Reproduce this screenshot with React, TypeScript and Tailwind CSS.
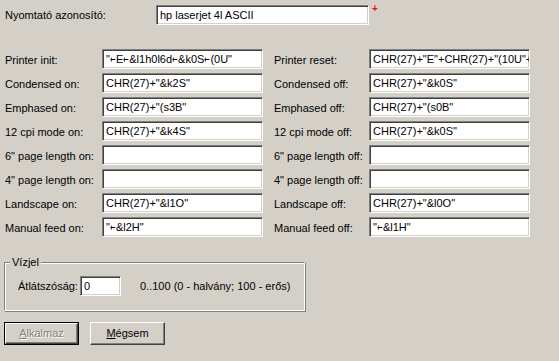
import React from 'react';

// Printer escape-code settings (left: "on", right: "off")
const rows: [string, string, string, string][] = [
  ['Printer init:', '"←E←&l1h0l6d←&k0S←(0U"', 'Printer reset:', 'CHR(27)+"E"+CHR(27)+"(10U"+'],
  ['Condensed on:', 'CHR(27)+"&k2S"', 'Condensed off:', 'CHR(27)+"&k0S"'],
  ['Emphased on:', 'CHR(27)+"(s3B"', 'Emphased off:', 'CHR(27)+"(s0B"'],
  ['12 cpi mode on:', 'CHR(27)+"&k4S"', '12 cpi mode off:', 'CHR(27)+"&k0S"'],
  ['6" page length on:', '', '6" page length off:', ''],
  ['4" page length on:', '', '4" page length off:', ''],
  ['Landscape on:', 'CHR(27)+"&l1O"', 'Landscape off:', 'CHR(27)+"&l0O"'],
  ['Manual feed on:', '"←&l2H"', 'Manual feed off:', '"←&l1H"'],
];

// the ESC char shows as a small narrow arrow
function renderCode(value: string) {
  return value.split('←').map((part, i) => (
    <React.Fragment key={i}>
      {i > 0 && (
        <span className="inline-block w-[6px] font-['DejaVu_Sans']">
          <span className="inline-block scale-x-[0.6] origin-left">←</span>
        </span>
      )}
      {part}
    </React.Fragment>
  ));
}

function Field({ value, className = '' }: { value: string; className?: string }) {
  return (
    <div
      className={`h-[20px] bg-white border border-t-[#808080] border-l-[#808080] border-b-white border-r-white shadow-[inset_1px_1px_0_#404040,inset_-1px_-1px_0_#d4d0c8] pl-[3px] pt-[1px] leading-[17px] whitespace-nowrap overflow-hidden text-black ${className}`}
    >
      {renderCode(value)}
    </div>
  );
}

export default function App() {
  return (
    <div className="w-[559px] h-[361px] bg-[#d4d0c8] text-[11px] text-black font-['Liberation_Sans',Arial,sans-serif] relative">
      {/* Printer id */}
      <div className="flex items-center pt-[5px] pl-[5px]">
        <span className="w-[151px]">Nyomtató azonosító:</span>
        <Field value="hp laserjet 4l ASCII" className="w-[213px]" />
        <span className="self-start text-[#ff0000] text-[10px] font-bold leading-[6px] ml-[3px] mt-[1px]">+</span>
      </div>

      {/* Codes */}
      <div className="mt-[24px] flex flex-col gap-[4px] pl-[5px]">
        {rows.map(([l1, v1, l2, v2]) => (
          <div key={l1} className="flex items-center">
            <span className="w-[97px] pt-[2px]">{l1}</span>
            <Field value={v1} className="w-[161px]" />
            <span className="w-[95px] ml-[11px] pt-[2px]">{l2}</span>
            <Field value={v2} className="w-[161px]" />
          </div>
        ))}
      </div>

      {/* Watermark group */}
      <div className="ml-[4px] mt-[25px] w-[301px] h-[49px] border border-t-[#808080] border-l-[#808080] border-b-white border-r-white shadow-[inset_1px_1px_0_#fff,1px_1px_0_#808080] relative">
        <span className="absolute -top-[8px] left-[5px] px-[2px] bg-[#d4d0c8] leading-[14px]">Vízjel</span>
        <div className="flex items-center pl-[13px] pt-[13px]">
          <span className="w-[62px]">Átlátszóság:</span>
          <Field value="0" className="w-[41px]" />
          <span className="ml-[19px]">0..100 (0 - halvány; 100 - erős)</span>
        </div>
      </div>

      {/* Buttons */}
      <div className="flex gap-[11px] pl-[4px] mt-[11px]">
        <div className="w-[75px] h-[23px] border border-black">
          <div className="w-full h-full border border-t-white border-l-white border-b-[#404040] border-r-[#404040] shadow-[inset_-1px_-1px_0_#808080] flex items-center justify-center text-[#808080] [text-shadow:1px_1px_0_#fff]">
            <span><span className="underline">A</span>lkalmaz</span>
          </div>
        </div>
        <div className="w-[75px] h-[23px] border border-t-white border-l-white border-b-[#404040] border-r-[#404040] shadow-[inset_-1px_-1px_0_#808080] flex items-center justify-center">
          <span><span className="underline">M</span>égsem</span>
        </div>
      </div>
    </div>
  );
}
